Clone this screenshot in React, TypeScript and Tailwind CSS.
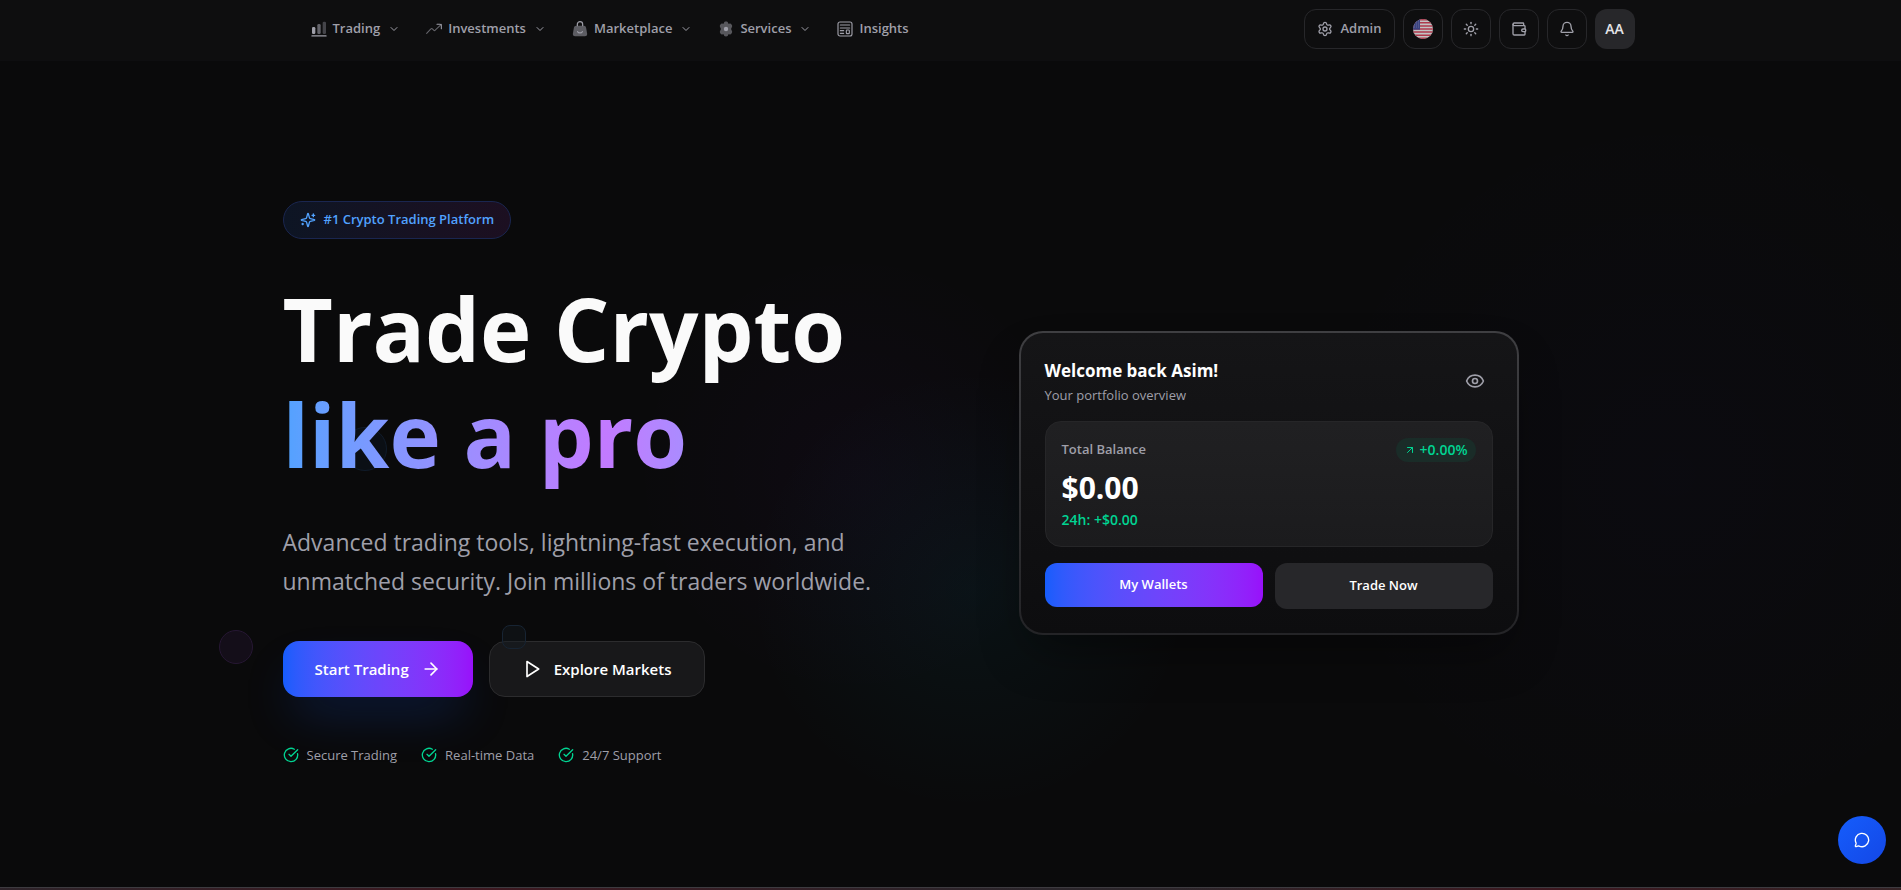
import type { ReactNode } from "react";
import {
  ArrowRight,
  ArrowUpRight,
  Bell,
  ChevronDown,
  CircleCheckBig,
  Eye,
  MessageCircle,
  Settings,
  Sun,
  Wallet,
} from "lucide-react";

function BarsIcon() {
  return (
    <svg viewBox="0 0 24 24" className="size-4 shrink-0" fill="currentColor" aria-hidden="true">
      <rect x="1.500" y="9" width="5" height="10.500" rx="2" />
      <rect x="9.500" y="4.500" width="5" height="15" rx="2" opacity=".6" />
      <rect x="17.500" y="1" width="5" height="18.500" rx="2" opacity=".38" />
      <rect x="0.500" y="21.500" width="23" height="1.800" rx=".9" />
    </svg>
  );
}

function TrendIcon() {
  return (
    <svg viewBox="0 0 24 24" className="size-4 shrink-0" fill="none" stroke="currentColor" strokeWidth="1.600" strokeLinecap="round" strokeLinejoin="round" aria-hidden="true">
      <path opacity=".6" d="M1 18.500l5.600-5.900c.9-.9 1.300-1.400 1.900-1.400.6 0 1 .5 1.900 1.400l.4.400c.9.9 1.300 1.400 1.900 1.400.6 0 1-.5 1.900-1.400L23 5" />
      <path d="M16.500 5H21c.9 0 1.400 0 1.700.3.3.3.3.8.3 1.700v4.500" />
    </svg>
  );
}

function BagIcon() {
  return (
    <svg viewBox="0 0 24 24" className="size-4 shrink-0" aria-hidden="true">
      <path fill="currentColor" opacity=".55" d="M6.200 7h11.600c2 0 2.900 1 3.300 3l1.500 8.500c.5 3-.6 4.500-3.300 4.500H4.700c-2.700 0-3.800-1.500-3.300-4.500L2.900 10c.4-2 1.300-3 3.300-3z" />
      <path fill="none" stroke="currentColor" strokeWidth="1.800" strokeLinecap="round" d="M8 7V5a4 4 0 0 1 8 0v2M8.500 16c1.200 2.600 5.800 2.600 7 0" />
    </svg>
  );
}

function GearIcon() {
  return (
    <svg viewBox="0 0 24 24" className="size-4 shrink-0" fill="currentColor" aria-hidden="true">
      <path opacity=".5" d="M9.500 1.500c.8-1 4.200-1 5 0l1.100 2.600 2.900-.3c1.400.2 3.200 3 2.700 4.400L19.600 12l1.600 3.800c.5 1.400-1.300 4.200-2.700 4.400l-2.900-.3-1.100 2.600c-.8 1-4.200 1-5 0l-1.100-2.600-2.900.3c-1.400-.2-3.200-3-2.700-4.400L4.400 12 2.800 8.200c-.5-1.400 1.300-4.200 2.700-4.400l2.900.3z" />
      <circle cx="12" cy="12" r="3.300" />
    </svg>
  );
}

function NewsIcon() {
  return (
    <svg viewBox="0 0 24 24" className="size-4 shrink-0" fill="none" stroke="currentColor" strokeWidth="1.700" strokeLinecap="round" strokeLinejoin="round" aria-hidden="true">
      <rect x="1.500" y="1.500" width="21" height="21" rx="3" />
      <path d="M5 6h14M5 10.500h14M5 14.500h5M5 18.500h5" />
      <rect x="14" y="13.500" width="4.500" height="5.500" rx="1" />
    </svg>
  );
}

function SparklesIcon() {
  return (
    <svg viewBox="0 0 24 24" className="size-4 shrink-0" fill="none" stroke="currentColor" strokeWidth="2" strokeLinecap="round" strokeLinejoin="round" aria-hidden="true">
      <path d="M9.937 15.500A2 2 0 0 0 8.500 14.063l-6.135-1.582a.5.5 0 0 1 0-.962L8.500 9.936A2 2 0 0 0 9.937 8.500l1.582-6.135a.5.5 0 0 1 .963 0L14.063 8.500A2 2 0 0 0 15.500 9.937l6.135 1.581a.5.5 0 0 1 0 .964L15.500 14.063a2 2 0 0 0-1.437 1.437l-1.582 6.135a.5.5 0 0 1-.963 0z" />
      <path d="M20 3v4M22 5h-4M4 17v2M5 18H3" />
    </svg>
  );
}

function PlayIcon() {
  return (
    <svg viewBox="0 0 24 24" className="size-5 shrink-0" fill="none" stroke="currentColor" strokeWidth="2" strokeLinecap="round" strokeLinejoin="round" aria-hidden="true">
      <polygon points="6 3 20 12 6 21 6 3" />
    </svg>
  );
}

function FlagIcon() {
  return (
    <svg viewBox="0 0 20 20" className="size-5 opacity-80" aria-hidden="true">
      <defs>
        <clipPath id="flag-round">
          <circle cx="10" cy="10" r="10" />
        </clipPath>
      </defs>
      <g clipPath="url(#flag-round)">
        <rect width="20" height="20" fill="#f0f0f0" />
        <path stroke="#d8435c" strokeWidth="1.540" d="M0 .77h20M0 3.850h20M0 6.920h20M0 10h20M0 13.080h20M0 16.150h20M0 19.230h20" />
        <rect width="7" height="10.700" fill="#46509b" />
        <path stroke="#b9bde0" strokeWidth=".7" strokeDasharray=".7 1.300" d="M1 2h6M1 4h6M1 6h6M1 8h6" />
      </g>
    </svg>
  );
}

const navItems: { label: string; icon: ReactNode; menu: boolean }[] = [
  { label: "Trading", icon: <BarsIcon />, menu: true },
  { label: "Investments", icon: <TrendIcon />, menu: true },
  { label: "Marketplace", icon: <BagIcon />, menu: true },
  { label: "Services", icon: <GearIcon />, menu: true },
  { label: "Insights", icon: <NewsIcon />, menu: false },
];

function Header() {
  const square =
    "flex size-10 items-center justify-center rounded-xl border border-[#27272a] text-[#a1a1aa]";
  return (
    <header className="relative z-10 border-b border-[#0e0e10] bg-[#0e0e0f]">
      <div className="mx-auto flex h-[60px] max-w-[1400px] items-center justify-between px-4 pb-0.5">
        <nav className="ml-8 flex items-center gap-0.5 text-[13px] font-semibold text-[#9f9fa9]">
          {navItems.map((item) =>
            item.menu ? (
              <button key={item.label} type="button" className="flex items-center gap-1.5 px-3 py-2">
                {item.icon}
                {item.label}
                <ChevronDown className="ml-0.5 size-3" />
              </button>
            ) : (
              <a key={item.label} href="#insights" className="flex items-center gap-1.5 px-3 py-2">
                {item.icon}
                {item.label}
              </a>
            ),
          )}
        </nav>
        <div className="flex items-center gap-2">
          <a
            href="#admin"
            className="flex h-10 items-center gap-2 rounded-xl border border-[#27272a] px-3 text-[13px] font-semibold text-[#9f9fa9]"
          >
            <Settings className="size-4" />
            Admin
          </a>
          <button type="button" aria-label="Language" className={square}>
            <FlagIcon />
          </button>
          <button type="button" aria-label="Theme" className={square}>
            <Sun className="size-4" />
          </button>
          <button type="button" aria-label="Wallet" className={square}>
            <Wallet className="size-4" />
          </button>
          <button type="button" aria-label="Notifications" className={square}>
            <Bell className="size-4" />
          </button>
          <button
            type="button"
            aria-label="Account"
            className="flex size-10 items-center justify-center rounded-xl bg-[#27272a] text-sm font-semibold text-[#e4e4e7]"
          >
            AA
          </button>
        </div>
      </div>
    </header>
  );
}

function PortfolioCard() {
  return (
    <section className="w-full max-w-[500px] rounded-3xl bg-linear-to-b from-[#3f3f42] to-[#242427] p-0.5 shadow-2xl shadow-black/40">
      <div className="rounded-[22px] bg-linear-to-b from-[#151517] to-[#0d0d0f] p-6">
        <div className="mb-4 flex items-center justify-between">
          <div>
            <h2 className="text-[17px] leading-7 font-bold text-white">Welcome back Asim!</h2>
            <p className="text-[13px] leading-5 text-[#9f9fa9]">Your portfolio overview</p>
          </div>
          <button type="button" aria-label="Hide balance" className="p-2 text-[#9f9fa9]">
            <Eye className="size-5" />
          </button>
        </div>
        <div className="mb-4 rounded-2xl border border-[#262628] bg-linear-to-b from-[#202022] to-[#1b1b1d] p-4">
          <div className="mb-2 flex items-center justify-between">
            <span className="text-[13px] font-semibold text-[#9f9fa9]">Total Balance</span>
            <span className="flex h-6 items-center gap-1 rounded-full bg-[#1a2c28] px-2 text-sm font-semibold text-[#00d492]">
              <ArrowUpRight className="size-3" />
              +0.00%
            </span>
          </div>
          <p className="mb-1 text-3xl leading-9 font-bold text-white">$0.00</p>
          <p className="text-sm leading-5 font-semibold text-[#00d492]">24h: +$0.00</p>
        </div>
        <div className="grid grid-cols-2 items-start gap-3">
          <button type="button" className="h-11 rounded-xl bg-linear-to-r from-[#155dfc] to-[#9810fa] text-[13px] font-semibold text-white">
            My Wallets
          </button>
          <button type="button" className="h-[46px] rounded-xl bg-[#27272a] text-[13px] font-semibold text-white">
            Trade Now
          </button>
        </div>
      </div>
    </section>
  );
}

function Hero() {
  return (
    <main className="relative flex flex-1 items-center overflow-hidden bg-[#0a0a0b] bg-[radial-gradient(circle_at_51%_64%,rgba(0,184,219,0.05),transparent_20%),radial-gradient(circle_at_45%_50%,rgba(152,16,250,0.03),transparent_20%),radial-gradient(circle_at_88%_50%,rgba(60,40,250,0.02),transparent_22%)] pt-[18px]">
      <div className="mx-auto grid w-full max-w-[1400px] grid-cols-2 items-center gap-16 px-8">
        <div className="relative">
          <div className="pointer-events-none absolute top-[226px] left-[60px] size-11 rounded-full border border-[#101b2a] bg-[#0b0f15]" />
          <div className="pointer-events-none absolute top-[429px] -left-16 size-[34px] rounded-full border border-[#261733] bg-[#140e19]" />
          <div className="relative mb-9 inline-flex h-[38px] items-center gap-2 rounded-full border border-[#1a2650] bg-linear-to-r from-[#0d1524] to-[#1c0f21] px-4 text-[13px] font-semibold text-[#51a2ff]">
            <SparklesIcon />
            #1 Crypto Trading Platform
          </div>
          <h1 className="relative mb-9 text-[87px] leading-[106px] font-bold text-[#fafafa]">
            Trade Crypto
            <br />
            <span className="bg-linear-to-r from-[#51a2ff] via-[#c27aff] via-80% to-[#a98cff] bg-clip-text text-transparent">
              like a pro
            </span>
          </h1>
          <p className="relative mb-10 text-[23px] leading-[39px] text-[#9f9fa9]">
            Advanced trading tools, lightning-fast execution, and
            <br />
            unmatched security. Join millions of traders worldwide.
          </p>
          <div className="relative flex gap-4 text-[15px] font-semibold text-white">
            <button
              type="button"
              className="flex h-14 items-center gap-3 rounded-2xl bg-linear-to-r from-[#155dfc] to-[#9810fa] px-8 shadow-2xl shadow-[#155dfc]/25"
            >
              Start Trading
              <ArrowRight className="size-5" />
            </button>
            <button
              type="button"
              className="relative flex h-14 items-center gap-3 rounded-2xl border border-[#2c2c2e] bg-[#18181a] px-8"
            >
              <PlayIcon />
              Explore Markets
              <span className="pointer-events-none absolute -top-[17px] left-3 size-6 rounded-lg border border-[#172433] bg-[#151b22]/40" />
            </button>
          </div>
          <ul className="relative mt-12 flex gap-6 text-[13px] leading-5 text-[#9f9fa9]">
            {["Secure Trading", "Real-time Data", "24/7 Support"].map((label) => (
              <li key={label} className="flex items-center gap-2">
                <CircleCheckBig className="size-4 text-[#00d492]" />
                {label}
              </li>
            ))}
          </ul>
        </div>
        <div className="flex justify-center pr-16">
          <PortfolioCard />
        </div>
      </div>
    </main>
  );
}

export default function App() {
  return (
    <div className="flex min-h-screen flex-col bg-[#0a0a0b] font-['Open_Sans','Noto_Sans',sans-serif]">
      <Header />
      <Hero />
      <div className="h-[3px] border-t border-[#3d3b40] bg-linear-to-r from-[#29252b] via-[#29252b] to-[#332426]">
        <div className="h-full bg-[radial-gradient(ellipse_30%_400px_at_25%_50%,#3d1820,transparent),radial-gradient(ellipse_20%_400px_at_82%_50%,#3d1820,transparent)]" />
      </div>
      <button
        type="button"
        aria-label="Open chat"
        className="fixed right-[15px] bottom-[26px] flex size-12 items-center justify-center rounded-full bg-linear-to-br from-[#155dfc] to-[#1447e6] text-white"
      >
        <MessageCircle className="size-4" />
      </button>
    </div>
  );
}
